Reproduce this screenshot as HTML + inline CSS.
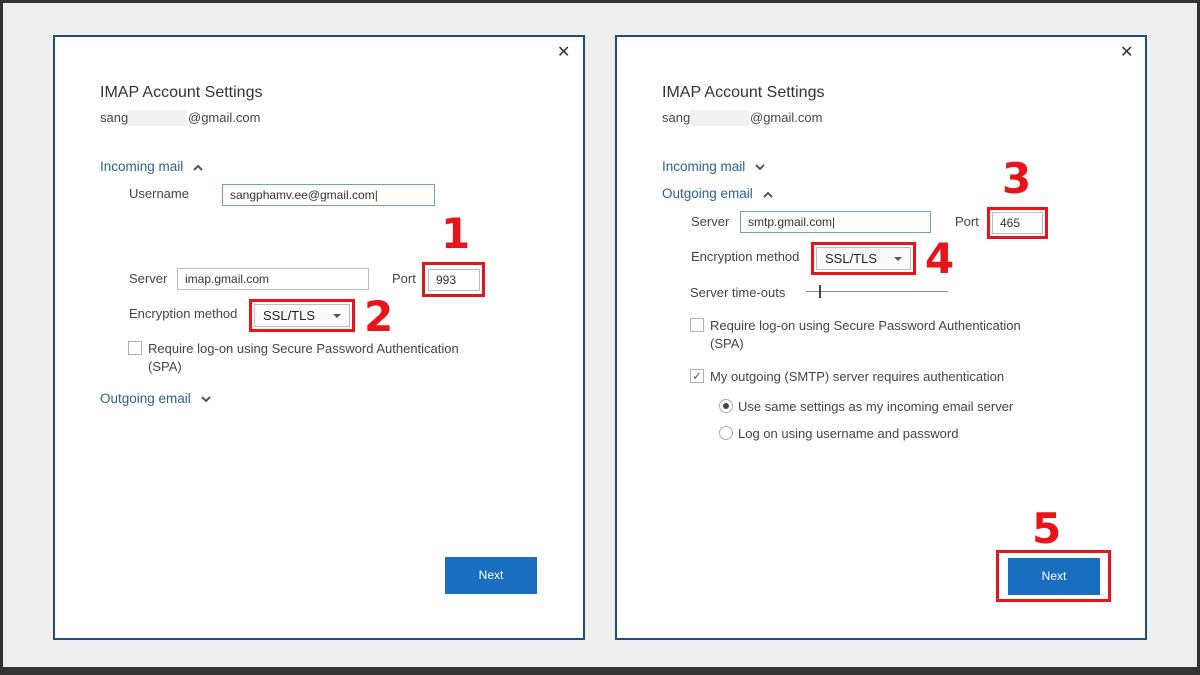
<!DOCTYPE html>
<html><head><meta charset="utf-8"><style>
*{margin:0;padding:0;box-sizing:border-box}
body{width:1200px;height:675px;position:relative;overflow:hidden;background:#efefef;font-family:"Liberation Sans",sans-serif;color:#444;font-size:13px}
.frame{position:absolute;left:0;top:0;width:1200px;height:675px;border-style:solid;border-color:#333;border-width:3px 3px 8px 3px}
.dlg{position:absolute;top:35px;width:532px;height:605px;background:#fff;border:2px solid #1e4e79}
.a{position:absolute;white-space:nowrap;line-height:16px;margin-top:1px}
.t{font-size:16px;color:#333;line-height:18px}
.blue{color:#2e5f96;font-size:13.5px}
.in{position:absolute;border:1px solid #bdbdbd;background:#fff;font-size:12px;color:#333;padding-left:7px;line-height:20px}
.in.f{border-color:#6a9fd4}
.red{position:absolute;border:3px solid #e8141b}
.num{position:absolute;color:#e8141b;font-weight:bold;font-size:42px;line-height:42px;font-family:"DejaVu Sans",sans-serif}
.cb{position:absolute;width:14px;height:14px;border:1px solid #b0b0b0;background:#fff}
.rd{position:absolute;width:14px;height:14px;border:1px solid #aaa;border-radius:50%;background:#fff}
.btn{position:absolute;background:#1a6ec0;color:#fff;font-size:12px;text-align:center;line-height:37px;width:92px;height:37px}
.x{position:absolute;font-size:16px;color:#333;line-height:16px}
.gray{position:absolute;background:#f1f1f1;height:16px}
.sel{position:absolute;border:1px solid #bdbdbd;background:#fafafa;font-size:13px;color:#222;padding-left:8px;line-height:21px}
.sel:after{content:"";position:absolute;right:8px;top:9px;border-left:4px solid transparent;border-right:4px solid transparent;border-top:4px solid #555}
.car{display:inline-block;margin-left:6px;vertical-align:middle}
</style></head><body>
<div class="frame"></div>

<div class="dlg" style="left:53px"></div>
<div class="x" style="left:557px;top:45px">✕</div>
<div class="a t" style="left:100px;top:83px">IMAP Account Settings</div>
<div class="a" style="left:100px;top:109px">sang</div><div class="gray" style="left:128px;top:110px;width:59px"></div><div class="a" style="left:188px;top:109px">@gmail.com</div>
<div class="a blue" style="left:100px;top:158px">Incoming mail <svg class="car" width="10" height="7"><path d="M1 6 L5 2 L9 6" stroke="#555" stroke-width="2" fill="none"/></svg></div>
<div class="a" style="left:129px;top:185px">Username</div>
<div class="in f" style="left:222px;top:184px;width:213px;height:22px">sangphamv.ee@gmail.com|</div>
<div class="a" style="left:129px;top:270px">Server</div>
<div class="in" style="left:177px;top:268px;width:192px;height:22px">imap.gmail.com</div>
<div class="a" style="left:392px;top:270px">Port</div>
<div class="in" style="left:428px;top:269px;width:52px;height:22px">993</div>
<div class="red" style="left:422px;top:262px;width:63px;height:35px"></div>
<div class="num" style="left:441px;top:213px">1</div>
<div class="a" style="left:129px;top:305px">Encryption method</div>
<div class="sel" style="left:254px;top:304px;width:96px;height:23px">SSL/TLS</div>
<div class="red" style="left:249px;top:299px;width:106px;height:33px"></div>
<div class="num" style="left:364px;top:296px">2</div>
<div class="cb" style="left:128px;top:341px"></div>
<div class="a" style="left:148px;top:340px">Require log-on using Secure Password Authentication</div>
<div class="a" style="left:148px;top:358px">(SPA)</div>
<div class="a blue" style="left:100px;top:390px">Outgoing email <svg class="car" width="10" height="7"><path d="M1 1 L5 5 L9 1" stroke="#555" stroke-width="2" fill="none"/></svg></div>
<div class="btn" style="left:445px;top:557px">Next</div>

<div class="dlg" style="left:615px"></div>
<div class="x" style="left:1120px;top:45px">✕</div>
<div class="a t" style="left:662px;top:83px">IMAP Account Settings</div>
<div class="a" style="left:662px;top:109px">sang</div><div class="gray" style="left:690px;top:110px;width:59px"></div><div class="a" style="left:750px;top:109px">@gmail.com</div>
<div class="a blue" style="left:662px;top:158px">Incoming mail <svg class="car" width="10" height="7"><path d="M1 1 L5 5 L9 1" stroke="#555" stroke-width="2" fill="none"/></svg></div>
<div class="a blue" style="left:662px;top:185px">Outgoing email <svg class="car" width="10" height="7"><path d="M1 6 L5 2 L9 6" stroke="#555" stroke-width="2" fill="none"/></svg></div>
<div class="a" style="left:691px;top:213px">Server</div>
<div class="in f" style="left:740px;top:211px;width:191px;height:22px">smtp.gmail.com|</div>
<div class="a" style="left:955px;top:213px">Port</div>
<div class="in" style="left:992px;top:212px;width:51px;height:22px">465</div>
<div class="red" style="left:987px;top:207px;width:61px;height:32px"></div>
<div class="num" style="left:1002px;top:158px">3</div>
<div class="a" style="left:691px;top:248px">Encryption method</div>
<div class="sel" style="left:816px;top:247px;width:95px;height:23px">SSL/TLS</div>
<div class="red" style="left:811px;top:242px;width:105px;height:33px"></div>
<div class="num" style="left:925px;top:238px">4</div>
<div class="a" style="left:690px;top:284px">Server time-outs</div>
<div style="position:absolute;left:806px;top:291px;width:142px;height:1px;background:#888"></div>
<div style="position:absolute;left:819px;top:285px;width:2px;height:13px;background:#444"></div>
<div class="cb" style="left:690px;top:318px"></div>
<div class="a" style="left:710px;top:317px">Require log-on using Secure Password Authentication</div>
<div class="a" style="left:710px;top:335px">(SPA)</div>
<div class="cb" style="left:690px;top:369px;font-size:12px;line-height:12px;color:#555;text-align:center">✓</div>
<div class="a" style="left:710px;top:368px">My outgoing (SMTP) server requires authentication</div>
<div class="rd" style="left:719px;top:399px"><div style="position:absolute;left:3px;top:3px;width:6px;height:6px;border-radius:50%;background:#444"></div></div>
<div class="a" style="left:738px;top:398px">Use same settings as my incoming email server</div>
<div class="rd" style="left:719px;top:426px"></div>
<div class="a" style="left:738px;top:425px">Log on using username and password</div>
<div class="red" style="left:996px;top:550px;width:115px;height:52px"></div>
<div class="btn" style="left:1008px;top:558px">Next</div>
<div class="num" style="left:1032px;top:508px">5</div>
</body></html>
